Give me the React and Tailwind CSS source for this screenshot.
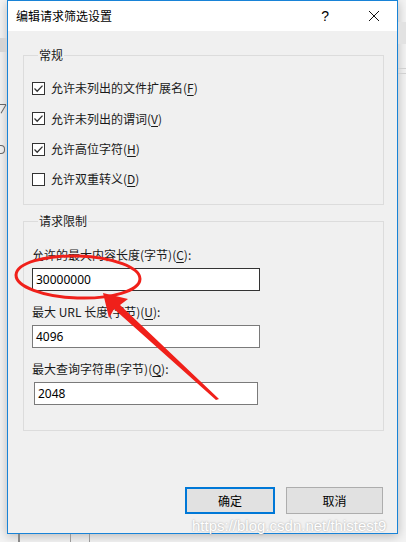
import React from "react";

const font = { fontFamily: '"Microsoft YaHei", "Noto Sans CJK SC", "Noto Sans", sans-serif' };

function CheckBox({ checked }) {
  return (
    <span className="w-[13px] h-[13px] border border-[#333333] bg-white flex items-center justify-center shrink-0">
      {checked && (
        <svg width="11" height="11" viewBox="0 0 11 11">
          <path d="M1.5 5.5 L4.2 8.2 L9.5 2.6" fill="none" stroke="#333333" strokeWidth="1.3" />
        </svg>
      )}
    </span>
  );
}

function CheckRow({ checked, text, letter, h }) {
  return (
    <div className={`flex items-center gap-[6px] ${h}`}>
      <CheckBox checked={checked} />
      <span className="text-[12px] leading-4 text-[#1a1a1a]">
        {text}(<span className="underline underline-offset-2">{letter}</span>)
      </span>
    </div>
  );
}

function Field({ label, letter, value, border, mt, inputClass }) {
  return (
    <div className={mt}>
      <div className="text-[12px] leading-4 text-[#1a1a1a] h-4">
        {label}(<span className="underline underline-offset-2">{letter}</span>):
      </div>
      <div className={`mt-[5px] h-[23px] bg-white border flex items-center pl-[3px] ${border} ${inputClass}`}>
        <span className="text-[12px] leading-4 text-black" style={{ fontFamily: '"Segoe UI", "Noto Sans", sans-serif' }}>{value}</span>
      </div>
    </div>
  );
}

export default function App() {
  return (
    <div className="relative w-[406px] h-[542px] bg-[#f4f4f4] overflow-hidden" style={font}>
      {/* bits of the app behind the dialog */}
      <div className="absolute left-0 top-[38px] w-[7px] h-[14px] bg-[#d4d4d4]" />
      <div className="absolute left-0 top-[104px] w-[6px] h-[1px] bg-[#666]" />
      <div className="absolute left-[3px] top-[104px] w-[1px] h-[10px] bg-[#666] rotate-[30deg]" />
      <div className="absolute left-0 top-[145px] w-[5px] h-[9px] border-y border-r border-[#666] rounded-r-[4px]" />
      <div className="absolute right-0 top-[22px] w-[8px] h-[22px] bg-[#e2e2e2]" />
      <div className="absolute right-0 top-[68px] w-[8px] h-[6px] border-y border-[#d0d0d0]" />
      <div className="absolute left-[18px] top-[534px] w-[2px] h-[8px] bg-[#888]" />
      <div className="absolute left-[70px] top-[534px] w-[1px] h-[8px] bg-[#999]" />
      <div className="absolute left-[89px] top-[534px] w-[1px] h-[8px] bg-[#999]" />

      <div className="ml-[7px] w-[391px] h-[534px] border border-[#1883d7] bg-[#f0f0f0] flex flex-col shadow-[0_2px_10px_rgba(0,0,0,0.25)]">
        {/* title bar */}
        <div className="h-[30px] bg-white flex items-center shrink-0">
          <span className="ml-[8px] text-[12px] text-black">编辑请求筛选设置</span>
          <span className="ml-auto mr-[39px] text-[14px] text-black" style={{ fontFamily: '"Liberation Sans", sans-serif' }}>?</span>
          <svg className="mr-[17px]" width="12" height="12" viewBox="0 0 12 12">
            <path d="M1 1 L11 11 M11 1 L1 11" stroke="#111" strokeWidth="1" />
          </svg>
        </div>

        {/* body */}
        <div className="flex flex-col pl-[15px] pt-[16px]">
          <fieldset className="w-[361px] border border-[#dcdcdc] px-[8px] pb-[10px]">
            <legend className="text-[12px] leading-4 text-[#1a1a1a] px-[1px] ml-[6px]">常规</legend>
            <div className="pt-[10px] flex flex-col">
              <CheckRow checked text="允许未列出的文件扩展名" letter="F" h="h-[30px]" />
              <CheckRow checked text="允许未列出的谓词" letter="V" h="h-[31px]" />
              <CheckRow checked text="允许高位字符" letter="H" h="h-[30px]" />
              <CheckRow text="允许双重转义" letter="D" h="h-[30px]" />
            </div>
          </fieldset>

          <fieldset className="mt-[8px] w-[361px] border border-[#dcdcdc] pl-[8px] pb-[25px]">
            <legend className="text-[12px] leading-4 text-[#1a1a1a] px-[1px] ml-[6px]">请求限制</legend>
            <Field label="允许的最大内容长度(字节)" letter="C" value="30000000" border="border-[#333333]" mt="mt-[18px]" inputClass="w-[228px]" />
            <Field label="最大 URL 长度(字节)" letter="U" value="4096" border="border-[#7a7a7a]" mt="mt-[13px]" inputClass="w-[228px]" />
            <Field label="最大查询字符串(字节)" letter="Q" value="2048" border="border-[#7a7a7a]" mt="mt-[13px]" inputClass="w-[224px] ml-[2px]" />
          </fieldset>

          <div className="mt-[56px] flex gap-[11px] pl-[162px]">
            <button className="w-[90px] h-[27px] bg-[#e1e1e1] border-2 border-[#0078d7] text-[12px] text-black">确定</button>
            <button className="w-[97px] h-[27px] bg-[#e1e1e1] border border-[#adadad] text-[12px] text-black">取消</button>
          </div>
        </div>
      </div>

      {/* red annotation */}
      <svg className="absolute left-0 top-0 pointer-events-none" width="406" height="542">
        <ellipse cx="78" cy="277" rx="62" ry="21" transform="rotate(2 78 277)" fill="none" stroke="#f0201a" strokeWidth="3" />
        <polygon points="103,293 128,299 120,305 219,399 216,400 114,309 109,318" fill="#f0201a" />
      </svg>

      {/* watermark */}
      <div
        className="absolute left-[192px] top-[516px] text-[15px] leading-5 text-white"
        style={{ fontFamily: '"Liberation Sans", Arial, sans-serif', textShadow: "0 0 2px rgba(0,0,0,0.35)" }}
      >
        https://blog.csdn.net/thistest9
      </div>
    </div>
  );
}
